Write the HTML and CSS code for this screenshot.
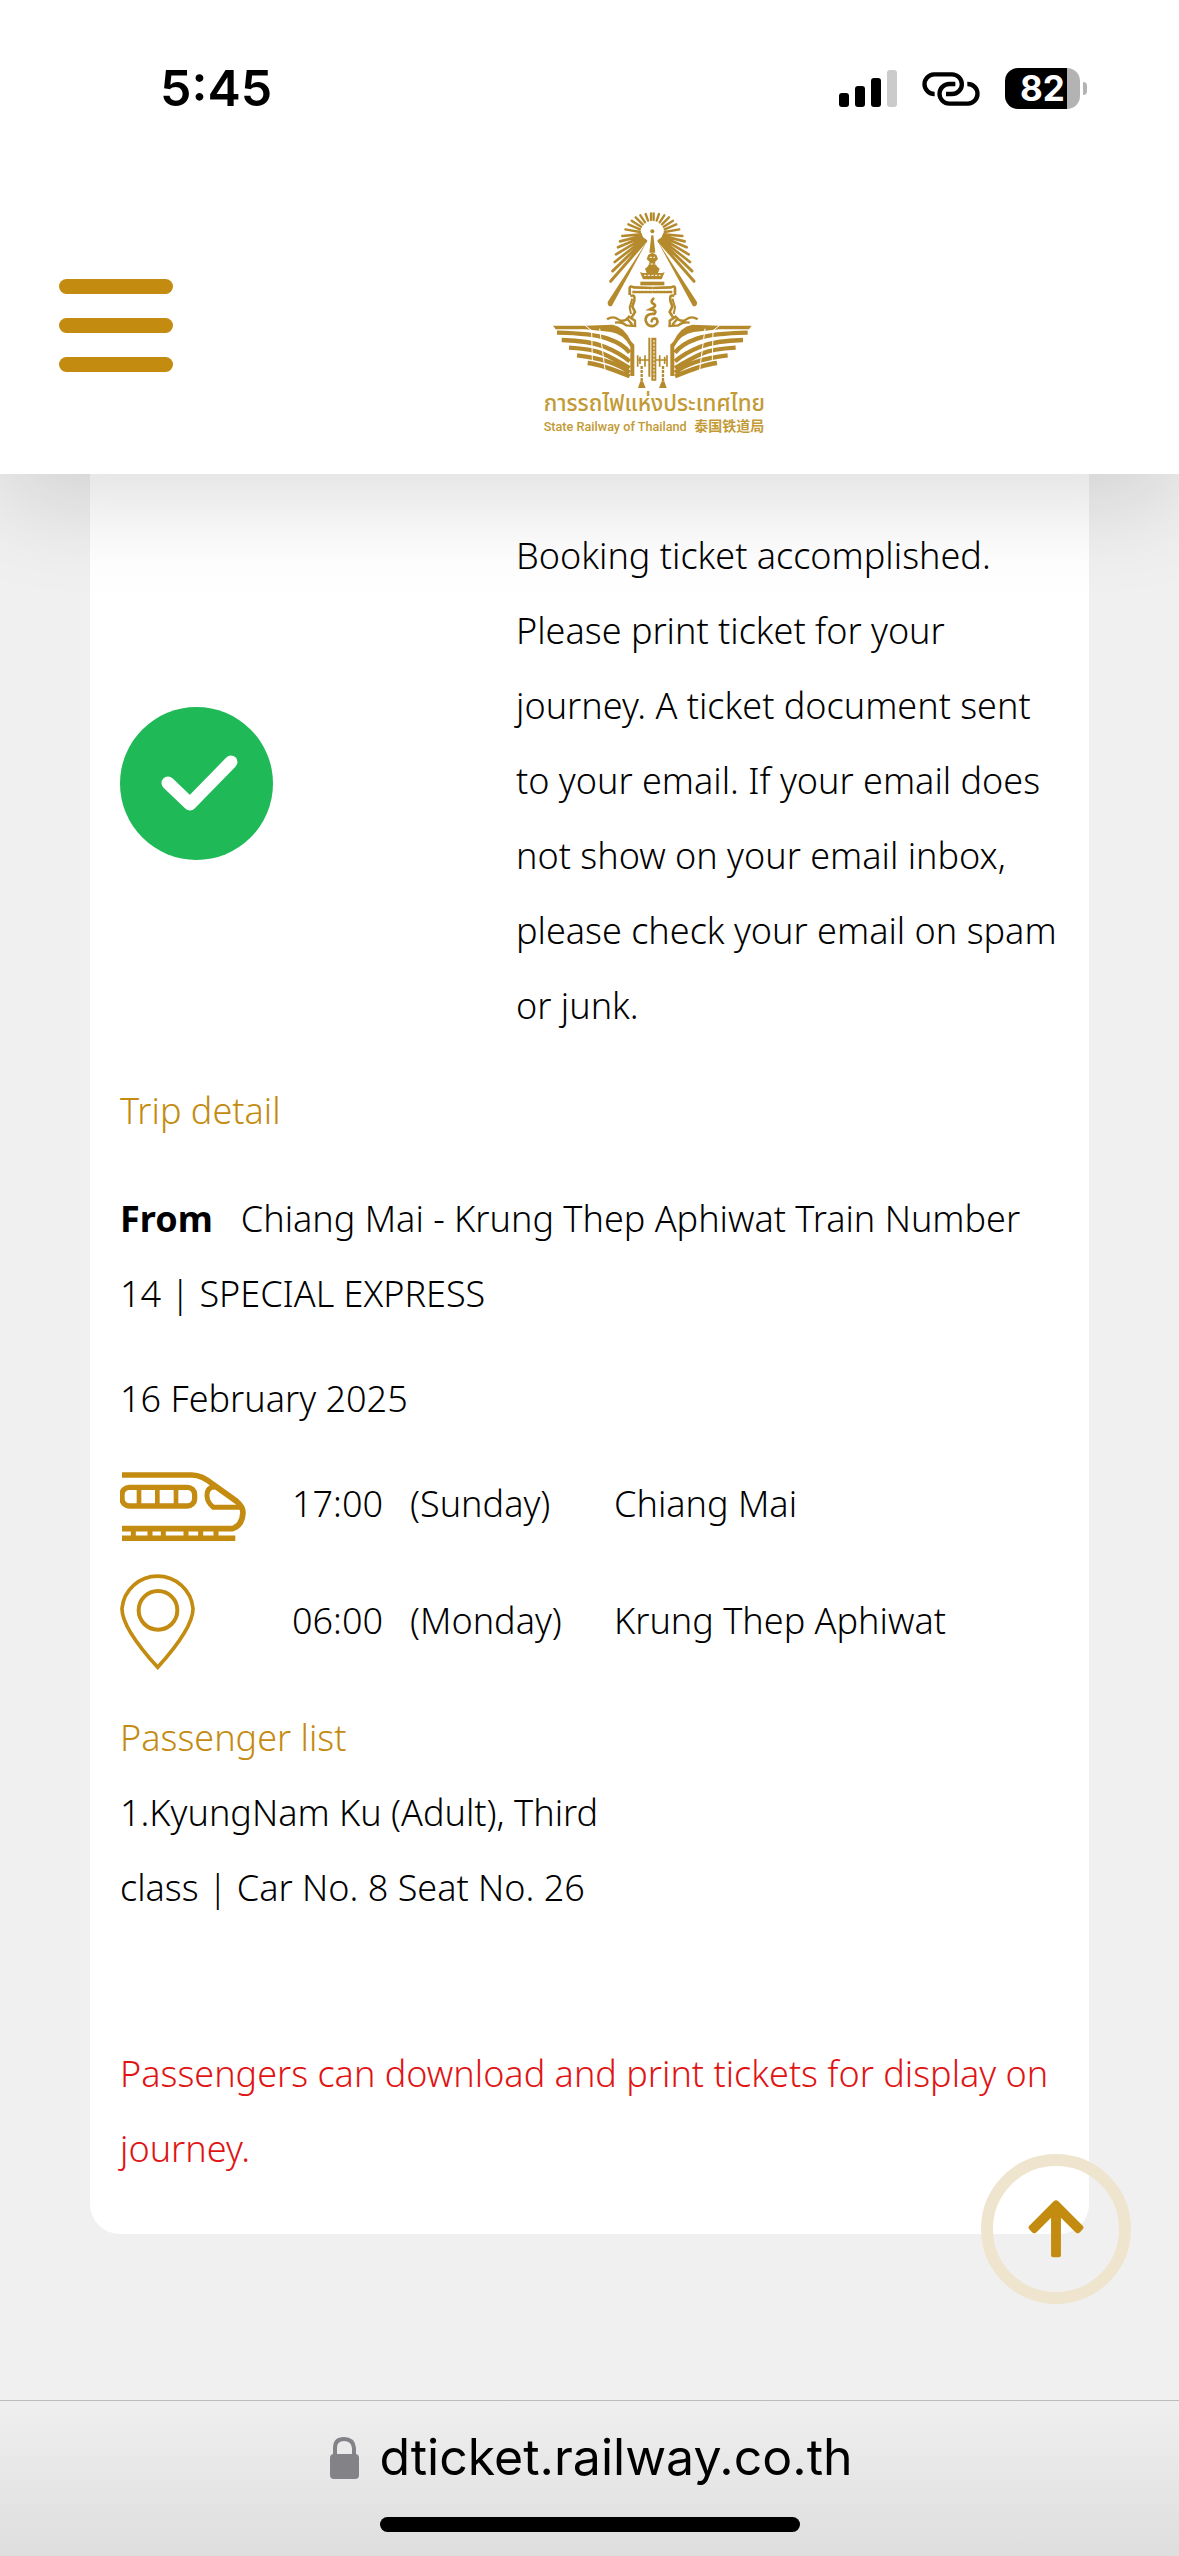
FILE: index.html
```html
<!DOCTYPE html>
<html lang="en">
<head>
<meta charset="utf-8">
<meta name="viewport" content="width=device-width, initial-scale=1">
<title>D-Ticket | State Railway of Thailand</title>
<link rel="stylesheet" href="styles.css">
</head>
<body>
<header class="top">
  <div class="status">
    <time class="clock">5:45</time>
    <div class="indicators">
      <svg class="signal" viewBox="0 0 58 37" aria-hidden="true">
        <rect x="0" y="23" width="10" height="14" rx="3"/>
        <rect x="16" y="16" width="10" height="21" rx="3"/>
        <rect x="32" y="8" width="10" height="29" rx="3"/>
        <rect x="48" y="0" width="10" height="37" rx="3" fill="#cbcbcb"/>
      </svg>
      <svg class="link" viewBox="0 0 174 102" aria-hidden="true" fill="none" stroke="#000" stroke-width="13" stroke-linecap="butt">
        <path d="M38 66 A29 29 0 0 1 36 7 H90 A29 29 0 0 1 90 66 H72"/>
        <path d="M136 36 A29 29 0 0 1 138 95 H82 A29 29 0 0 1 82 36 H100"/>
      </svg>
      <span class="battery"><span class="level">82</span></span>
    </div>
  </div>
  <nav class="nav">
    <button class="menu" type="button" aria-label="Menu"><span></span><span></span><span></span></button>
    <a class="brand" href="#top" aria-label="State Railway of Thailand">
      <svg class="logo" viewBox="0 33 750 687">
        <defs>
          <g id="half">
            <g stroke="#b58a2c" stroke-linecap="round" fill="none">
              <path stroke-width="7" d="M366 60V40M357 62 350 42M348 67 334 46M341 73 320 52M336 80 308 62M333 88 298 73M333 96 289 88"/>
              <path stroke-width="8" d="M335 103 280 108M337 108 273 124M338 112 267 142M341 115 261 163M344 118 257 186"/>
              <path stroke-width="9" d="M347 120 251 213M350 123 245 244"/>
            </g>
            <path fill="#b58a2c" d="M354 124 236 306Q235 320 248 319Z"/>
            <g fill="none" stroke="#b58a2c" stroke-width="8">
              <path d="M302 285V264Q302 256 314 262L370 264M310 276H370M304 288Q320 282 316 302L310 320 318 336 308 352"/>
              <path stroke-width="6" d="M310 296 302 322 306 342"/>
              <path stroke-width="7" d="M234 358Q252 346 268 358T300 350L318 362V382M258 368Q278 364 292 376L322 378M296 358 310 374"/>
            </g>
            <path fill="#b58a2c" d="M72 377H170L250 374Q286 380 306 424L316 434V528H304V440Q284 402 246 396L170 388H80Z"/>
            <path fill="none" stroke="#b58a2c" stroke-width="13" d="M84 398Q190 400 236 416T302 458M98 420Q180 422 226 440T302 484M120 443Q190 447 222 461T302 504M144 466Q200 472 240 486T302 518M176 489Q220 494 302 529"/>
            <path stroke="#fff" stroke-width="3" fill="none" d="M166 374 188 392 190 480M212 386 228 510"/>
            <g stroke="#b58a2c" fill="none">
              <path stroke-width="5" d="M326 466V500M333 470V492M348 466V500M328 480H360"/>
              <path stroke-width="7" stroke-dasharray="9 3" d="M338 498V546"/>
            </g>
            <path fill="#b58a2c" d="M334 544H342L350 564H327Z"/>
          </g>
        </defs>
        <use href="#half"/>
        <use href="#half" transform="translate(740 0) scale(-1 1)"/>
        <g fill="#b58a2c">
          <circle cx="370" cy="94" r="6"/>
          <path d="M367 106H373L379 158H361Z"/>
          <path d="M358 164 370 158 382 164 387 177 378 186 384 200H356L362 186 353 177Z"/>
          <path d="M348 206 358 198H382L392 206 387 219H400L407 216 398 238H342L333 216 341 219H353Z"/>
          <path d="M334 245H406V256H334Z"/>
          <path d="M358 413H364V530H358ZM367 413H382V542H367Z"/>
        </g>
        <g fill="none" stroke="#fff" stroke-width="3"><path d="M354 192H386M345 226H395M375 420V538M362 172H378M320 270H420" stroke-dasharray="7 4"/></g>
        <path fill="none" stroke="#b58a2c" stroke-width="8" stroke-linecap="round" d="M373 296Q362 306 374 312T364 328Q386 330 376 342 348 340 350 362 356 382 374 378 392 370 382 356 370 352 368 364"/>
        <g class="logo-text">
          <text class="logo-thai" x="376" y="632" text-anchor="middle">การรถไฟแห่งประเทศไทย</text>
          <text class="logo-en" x="44" y="692">State Railway of Thailand</text>
          <text class="logo-cn" x="496" y="693">泰国铁道局</text>
        </g>
      </svg>
    </a>
  </nav>
</header>

<main class="page" id="top">
  <section class="card">
    <div class="result">
      <svg class="tick" viewBox="0 0 153 153" role="img" aria-label="Success">
        <circle cx="76.5" cy="76.5" r="76.5" fill="#1fb957"/>
        <path d="M48 76 70 97 111 55" fill="none" stroke="#fff" stroke-width="13" stroke-linecap="round" stroke-linejoin="round"/>
      </svg>
      <p class="message">Booking ticket accomplished. Please print ticket for your journey. A ticket document sent to your email. If your email does not show on your email inbox, please check your email on spam or junk.</p>
    </div>

    <h2 class="heading trip-heading">Trip detail</h2>
    <p class="route"><strong class="from">From</strong>Chiang Mai - Krung Thep Aphiwat Train Number 14 | SPECIAL EXPRESS</p>
    <p class="date">16 February 2025</p>

    <ul class="stops">
      <li class="stop">
        <svg class="train" viewBox="0 0 378 207" aria-hidden="true" fill="none" stroke="#c38b10" stroke-width="17">
          <path d="M6 9H216Q246 9 280 38L350 88Q369 104 369 122Q366 162 336 170H6M6 199H346"/>
          <rect x="6" y="46" width="218" height="56" rx="22" stroke-width="16"/>
          <path d="M57 46V102M112 46V102M168 46V102" stroke-width="14"/>
          <path d="M284 46H274Q260 52 261 72T280 106H364" stroke-width="15"/>
          <path d="M40 170V199M90 170V199M130 170V199M198 170V199M242 170V199M288 170V199" stroke-width="15"/>
        </svg>
        <time>17:00</time><span>(Sunday)</span><span>Chiang Mai</span>
      </li>
      <li class="stop">
        <svg class="pin" viewBox="0 0 225 297" aria-hidden="true" fill="none" stroke="#c38b10" stroke-width="11">
          <path d="M113 289Q5 170 6 112A107 107 0 0 1 219 112Q220 170 113 289Z"/>
          <circle cx="114" cy="118" r="58" stroke-width="12"/>
        </svg>
        <time>06:00</time><span>(Monday)</span><span>Krung Thep Aphiwat</span>
      </li>
    </ul>

    <h2 class="heading">Passenger list</h2>
    <p class="passenger">1.KyungNam Ku (Adult), Third class | Car No. 8 Seat No. 26</p>
    <p class="notice">Passengers can download and print tickets for display on journey.</p>
  </section>
</main>

<button class="to-top" type="button" aria-label="Back to top">
  <svg viewBox="0 0 170 176" aria-hidden="true" fill="#c38b10">
    <path d="M78 4Q85 -3 92 4L166 78Q171 84 166 89L157 99Q151 104 145 99L100 54V166Q100 174 92 174H78Q70 174 70 166V54L25 99Q19 104 13 99L4 89Q-1 84 4 78Z"/>
  </svg>
</button>

<footer class="browser">
  <a class="address" href="#top">
    <svg class="lock" viewBox="0 0 29 42" aria-hidden="true">
      <path d="M5 20V11Q5 2 14 2T24 11V20" fill="none" stroke="#828287" stroke-width="4"/>
      <rect y="17" width="29" height="25" rx="4" fill="#828287"/>
    </svg>
    <span>dticket.railway.co.th</span>
  </a>
  <div class="home"></div>
</footer>
</body>
</html>
```
FILE: styles.css
```css
* { box-sizing: border-box; }

html { background: #f0f0f0; }

body {
  margin: 0;
  min-height: 100vh;
  display: flex;
  flex-direction: column;
  overflow-x: hidden;
  background: #f0f0f0;
  color: #000;
  font-family: "Noto Sans", "Open Sans", sans-serif;
  font-weight: 300;
  font-size: 36px;
  line-height: 75px;
}

h2, p, ul { margin: 0; padding: 0; }

button {
  padding: 0;
  border: 0;
  background: none;
  cursor: pointer;
}

svg { display: block; flex: none; }

/* Header */
.top {
  position: relative;
  z-index: 2;
  background: #fff;
  box-shadow: 0 30px 90px rgba(0, 0, 0, 0.13);
}

.status {
  display: flex;
  justify-content: space-between;
  align-items: center;
  padding: 51px 99px 15px 160px;
  font-family: Inter, sans-serif;
}

.clock {
  font-size: 50px;
  font-weight: 600;
}

.indicators {
  display: flex;
  align-items: center;
  gap: 25px;
}

.signal { width: 58px; height: 37px; }
.link { width: 58px; height: 34px; }

.battery {
  position: relative;
  width: 75px;
  height: 41px;
  border-radius: 13px;
  background: linear-gradient(90deg, #000 62px, #b3b3b3 62px);
}

.battery::after {
  content: "";
  position: absolute;
  left: 78px;
  top: 14px;
  width: 4px;
  height: 13px;
  border-radius: 0 4px 4px 0;
  background: #b3b3b3;
}

.level {
  display: block;
  padding-left: 15px;
  color: #fff;
  font-size: 35px;
  font-weight: 700;
  line-height: 41px;
}

.nav {
  display: flex;
  align-items: center;
  padding: 70px 44px 34px 59px;
}

.menu {
  display: grid;
  gap: 24px;
  width: 114px;
}

.menu span {
  height: 15px;
  border-radius: 8px;
  background: #c38b10;
}

.brand {
  flex: 1;
  display: flex;
  justify-content: center;
}

.logo { width: 250px; height: 229px; }
.logo-text { fill: #c39a35; }
.logo-thai { font: 500 67px "Noto Sans Thai", "Noto Sans", sans-serif; }
.logo-en { font: 500 38px Roboto, sans-serif; }
.logo-cn { font: 700 42px "Noto Sans CJK SC", sans-serif; }

/* Ticket card */
.page {
  flex: 1;
  padding: 0 90px 90px;
}

.card {
  padding: 44px 30px 48px;
  border-radius: 0 0 30px 30px;
  background: #fff;
}

.result {
  display: grid;
  grid-template-columns: 396px 1fr;
  align-items: center;
  margin-bottom: 30px;
}

.tick,
.train {
  box-sizing: content-box;
  padding-top: 5px;
}

.tick { width: 153px; height: 153px; }

.heading {
  color: #c38b10;
  font-size: 36px;
  font-weight: 300;
}

.trip-heading { margin-bottom: 33px; }

.route { margin-bottom: 30px; }

.from {
  margin-right: 28px;
  font-weight: 700;
}

.date { margin-bottom: 9px; }

.stops {
  margin-bottom: 21px;
  list-style: none;
}

.stop {
  display: grid;
  grid-template-columns: 172px 118px 204px 1fr;
  align-items: center;
  min-height: 117px;
}

.train { width: 126px; height: 69px; }
.pin { width: 75px; height: 99px; }

.passenger {
  width: 53%;
  margin-bottom: 111px;
}

.notice { color: #e01414; }

/* Floating button */
.to-top {
  position: fixed;
  right: 48px;
  bottom: 252px;
  z-index: 3;
  display: grid;
  place-items: center;
  width: 150px;
  height: 150px;
  border: 12px solid #efe5cf;
  border-radius: 50%;
}

.to-top svg { width: 56px; height: 58px; }

/* Browser bar */
.browser {
  position: sticky;
  bottom: 0;
  display: flex;
  flex-direction: column;
  align-items: center;
  gap: 22px;
  padding: 19px 0 24px;
  border-top: 1px solid #bbbcbb;
  background: linear-gradient(#efefef, #dedede);
}

.address {
  display: flex;
  align-items: center;
  gap: 20px;
  padding-left: 4px;
  color: #000;
  font-family: Inter, sans-serif;
  font-size: 50px;
  font-weight: 400;
  text-decoration: none;
}

.lock { width: 29px; height: 42px; }

.home {
  width: 420px;
  height: 15px;
  border-radius: 8px;
  background: #000;
}
```
